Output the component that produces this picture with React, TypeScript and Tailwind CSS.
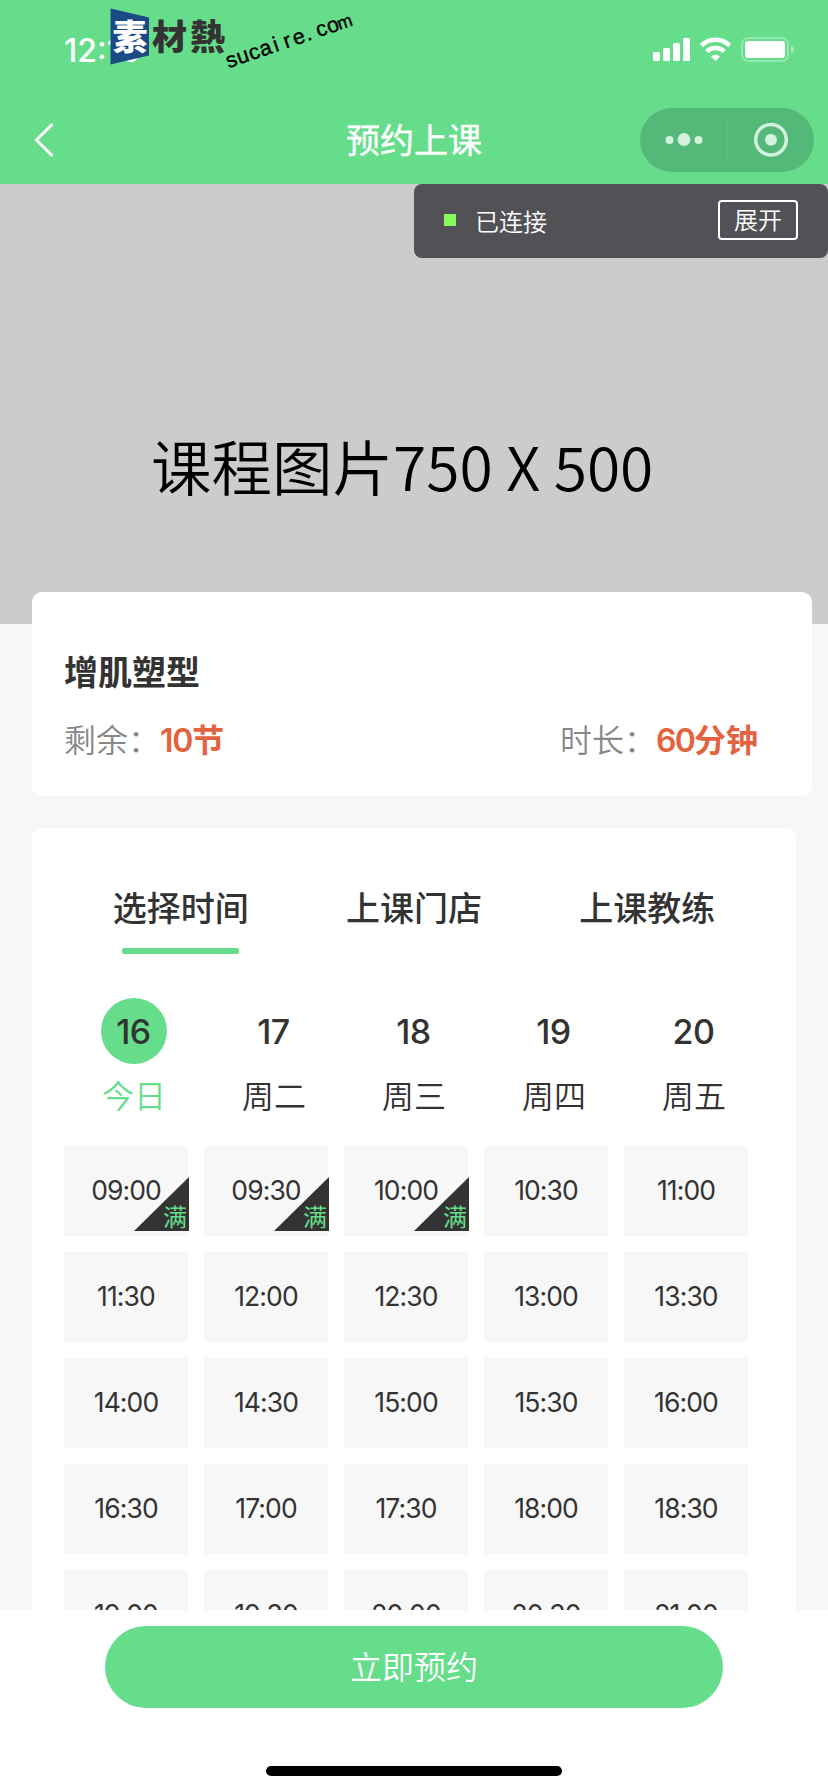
import clsx from "clsx";

const tabs = ["选择时间", "上课门店", "上课教练"];

const days = [
  { date: "16", label: "今日" },
  { date: "17", label: "周二" },
  { date: "18", label: "周三" },
  { date: "19", label: "周四" },
  { date: "20", label: "周五" },
];

const slots = [
  "09:00", "09:30", "10:00", "10:30", "11:00",
  "11:30", "12:00", "12:30", "13:00", "13:30",
  "14:00", "14:30", "15:00", "15:30", "16:00",
  "16:30", "17:00", "17:30", "18:00", "18:30",
  "19:00", "19:30", "20:00", "20:30", "21:00",
];

const fullSlots = ["09:00", "09:30", "10:00"];

const Watermark = () => (
  <div className="absolute left-[110px] top-[8px]">
    <svg width="260" height="64" viewBox="0 0 260 64">
      <path d="M.5.5 39 9.500V47.500L.5 56.500Z" fill="#1c4a84" />
      <g fontFamily="'Noto Sans CJK TC', sans-serif" fontWeight="900" fontSize="35">
        <text x="2.500" y="42" fill="#fff">素</text>
        <text x="42" y="42" fill="#333">材</text>
        <text x="80" y="42" fill="#333">熱</text>
      </g>
      <text
        transform="translate(118 60.500) rotate(-19)"
        x="6 18 30 42 53 65 77 87 101 113 125.500"
        textAnchor="middle"
        fontFamily="'Liberation Sans', sans-serif"
        fontSize="21.500"
        stroke="#000"
        strokeWidth=".4"
      >
        sucaire.co<tspan fontSize="18">m</tspan>
      </text>
    </svg>
  </div>
);

const StatusIcons = () => (
  <svg width="142" height="26" viewBox="0 0 142 26" fill="#fff">
    <rect x="0" y="15" width="7" height="9" rx="1.500" />
    <rect x="10" y="11" width="7" height="13" rx="1.500" />
    <rect x="20" y="6" width="7" height="18" rx="1.500" />
    <rect x="30" y="1" width="7" height="23" rx="1.500" />
    <g fill="none" stroke="#fff" strokeWidth="4.400">
      <path d="M48.300 8.600a20.300 20.300 0 0 1 28.400 0" />
      <path d="M53.700 14.500a12.700 12.700 0 0 1 17.600 0" />
    </g>
    <path d="M62.500 24 58 19.600a6.500 6.500 0 0 1 9 0Z" />
    <rect x="89" y="1" width="46" height="23" rx="6" fill="none" stroke="#fff" strokeOpacity=".3" strokeWidth="2" />
    <rect x="92" y="4" width="40" height="17" rx="3" />
    <path d="M138 8.500c4 1.500 4 6.500 0 8Z" fillOpacity=".4" />
  </svg>
);

const Header = () => (
  <header className="relative h-[184px] shrink-0 bg-[#66dd8b] text-white">
    <div className="flex h-24 items-center justify-between pl-[64px] pr-[33px] pt-[3px]">
      <span className="pt-[2px] text-[32px] font-medium">12:16</span>
      <StatusIcons />
    </div>
    <div className="grid h-[88px] grid-cols-[1fr_auto_1fr] items-center pl-[34px] pr-[14px]">
      <svg width="20" height="36" viewBox="0 0 20 36" fill="none" stroke="#fff" strokeWidth="3">
        <path d="M18.500 2 2.500 18l16 16" />
      </svg>
      <h1 className="relative -left-[10px] pt-px text-[34px] leading-none [-webkit-text-stroke:0.4px_white]">
        预约上课
      </h1>
      <div className="flex h-16 w-[174px] items-center justify-self-end rounded-full bg-[#54b978]">
        <svg width="174" height="64" viewBox="0 0 174 64" fill="#d2f2de">
          <circle cx="29.500" cy="32" r="4" />
          <circle cx="44" cy="31.500" r="6.500" />
          <circle cx="58.500" cy="32" r="4" />
          <path d="M87.500 12v40" stroke="#5bbf7f" />
          <circle cx="131" cy="31.700" r="15.300" fill="none" stroke="#d2f2de" strokeWidth="3.500" />
          <circle cx="131" cy="31.700" r="6" />
        </svg>
      </div>
    </div>
    <Watermark />
  </header>
);

const Connection = () => (
  <div className="absolute right-0 top-0 flex h-[74px] w-[414px] items-start rounded-lg bg-[#525156] pl-[30px] pr-[30px] pt-4 text-[24px] font-[350] leading-none text-white">
    <span className="mt-[14px] h-3 w-3 bg-[#85fc5c]" />
    <span className="ml-[19px] mt-[11px]">已连接</span>
    <button className="ml-auto flex h-10 w-20 items-center justify-center rounded border-2 border-white pt-px">
      展开
    </button>
  </div>
);

const Slot = ({ time }: { time: string }) => (
  <div className="relative flex h-[90px] items-center justify-center bg-[#f7f7f7] text-[26.5px] tracking-[-0.9px]">
    {time}
    {fullSlots.includes(time) && (
      <div className="absolute -right-px bottom-[5px] h-[54px] w-[55px] tracking-normal">
        <svg className="absolute" width="55" height="54" viewBox="0 0 55 54">
          <path d="M55 0v54H0Z" fill="#333" />
        </svg>
        <span className="absolute bottom-px right-[2px] text-[24px] leading-none text-[#66dd8b]">满</span>
      </div>
    )}
  </div>
);

export default function App() {
  return (
    <div className="flex h-[1792px] w-[828px] flex-col overflow-hidden bg-[#f7f7f7] font-['Inter','Noto_Sans_CJK_SC',sans-serif] text-[#333]">
      <Header />
      <main className="min-h-0 flex-1 overflow-hidden">
        <div className="relative h-[440px] bg-[#ccc]">
          <p className="pl-[151px] pt-[237px] font-['Noto_Sans_CJK_SC',sans-serif] text-[60.5px] font-[350] leading-[88px] text-black">
            课程图片750 X 500
          </p>
          <Connection />
        </div>

        <section className="relative -mt-8 ml-8 h-[204px] w-[780px] rounded-[10px] bg-white px-8 pt-[61px]">
          <h2 className="text-[34px] font-bold leading-10">增肌塑型</h2>
          <div className="mt-[28px] flex justify-between pr-[22px] text-[32px] leading-10 text-[#888]">
            <p className="font-[350]">
              剩余：
              <b className="font-semibold text-[#e2633f]">
                <span className="tracking-[-1.200px]">10</span>节
              </b>
            </p>
            <p className="font-[350]">
              时长：
              <b className="font-semibold text-[#e2633f]">
                <span className="tracking-[-1.800px]">60</span>分钟
              </b>
            </p>
          </div>
        </section>

        <section className="ml-8 mt-8 w-[764px] rounded-[10px] bg-white px-8 pt-[61px]">
          <div className="grid w-[700px] grid-cols-3">
            {tabs.map((tab, i) => (
              <div key={tab} className="flex flex-col items-center">
                <span className="text-[34px] font-medium leading-10">{tab}</span>
                {i === 0 && <span className="mt-[19px] h-[6px] w-[117px] rounded-[2px] bg-[#66dd8b]" />}
              </div>
            ))}
          </div>

          <div className="mt-11 grid w-[700px] grid-cols-5">
            {days.map(({ date, label }, i) => (
              <div key={date} className="flex flex-col items-center">
                <span
                  className={clsx(
                    "flex h-[66px] w-[66px] items-center justify-center rounded-full pr-px pt-px text-[34px] font-medium tracking-[-0.5px]",
                    i === 0 && "bg-[#66dd8b]"
                  )}
                >
                  {date}
                </span>
                <span className={clsx("mt-[13px] text-[32px] font-[350] leading-10", i === 0 && "text-[#66dd8b]")}>
                  {label}
                </span>
              </div>
            ))}
          </div>

          <div className="mt-[29px] grid w-[684px] grid-cols-5 gap-4">
            {slots.map((time) => (
              <Slot key={time} time={time} />
            ))}
          </div>
        </section>
      </main>

      <footer className="flex h-[182px] shrink-0 flex-col items-center bg-white pt-4">
        <button className="h-[82px] w-[618px] rounded-full bg-[#66dd8b] pt-px text-[32px] font-[350] text-white">
          立即预约
        </button>
        <span className="mt-[58px] h-[10px] w-[296px] rounded-full bg-black" />
      </footer>
    </div>
  );
}
